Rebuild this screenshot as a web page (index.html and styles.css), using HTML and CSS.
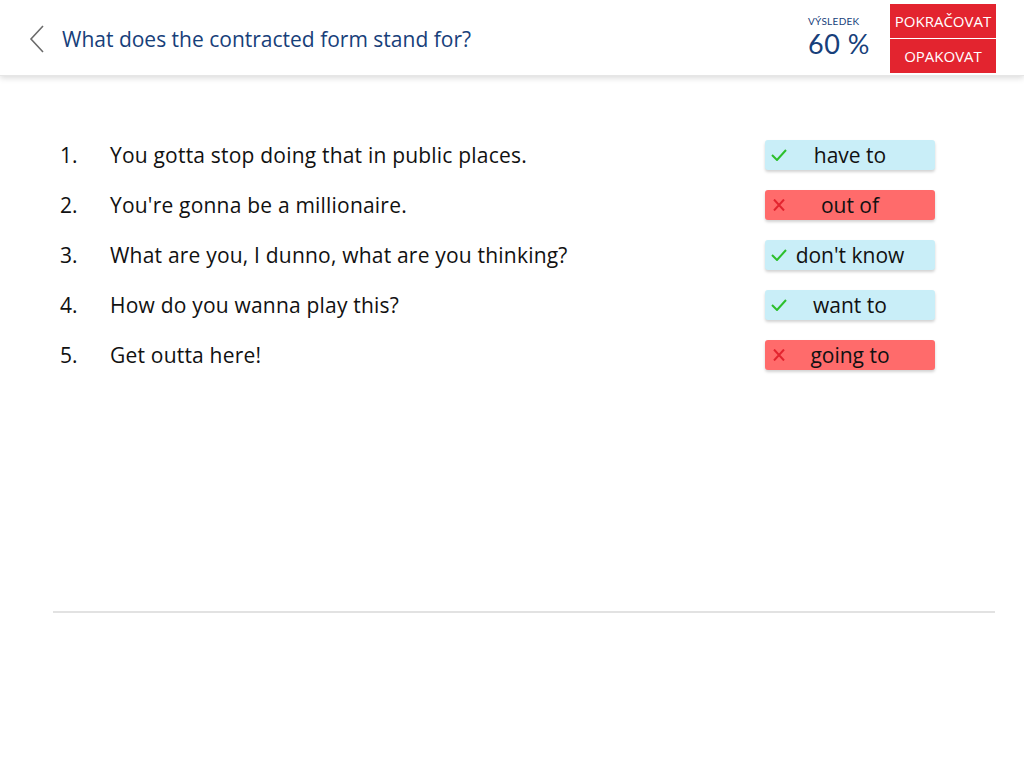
FILE: index.html
```html
<!doctype html>
<html>
<head>
    <meta charset="UTF-8">
    <title>What does the contracted form stand for?</title>
    <link rel="stylesheet" href="styles.css">
</head>
<body>
<header class="topbar">
    <div class="title-group">
        <svg class="back" width="18" height="30" viewBox="0 0 18 30"><path d="M15 2 L3 15 L15 28" fill="none" stroke="#6b6b6b" stroke-width="1.6"/></svg>
        <h1>What does the contracted form stand for?</h1>
    </div>
    <div class="score">
        <span class="score-label">VÝSLEDEK</span>
        <span class="score-value">60 %</span>
    </div>
    <div class="actions">
        <button class="btn">POKRAČOVAT</button>
        <button class="btn">OPAKOVAT</button>
    </div>
</header>

<main class="content">
    <ol class="questions">
        <li class="row">
            <span class="num">1.</span>
            <span class="text">You gotta stop doing that in public places.</span>
            <span class="pill ok"><svg class="mark" width="16" height="12" viewBox="0 0 16 12"><path d="M1 6 L6 11 L15 1" fill="none" stroke="#2cbf2c" stroke-width="2"/></svg>have to</span>
        </li>
        <li class="row">
            <span class="num">2.</span>
            <span class="text">You're gonna be a millionaire.</span>
            <span class="pill bad"><svg class="mark" width="16" height="12" viewBox="0 0 16 12"><path d="M3 0.5 L13 11.5 M13 0.5 L3 11.5" fill="none" stroke="#e3242f" stroke-width="2"/></svg>out of</span>
        </li>
        <li class="row">
            <span class="num">3.</span>
            <span class="text">What are you, I dunno, what are you thinking?</span>
            <span class="pill ok"><svg class="mark" width="16" height="12" viewBox="0 0 16 12"><path d="M1 6 L6 11 L15 1" fill="none" stroke="#2cbf2c" stroke-width="2"/></svg>don't know</span>
        </li>
        <li class="row">
            <span class="num">4.</span>
            <span class="text">How do you wanna play this?</span>
            <span class="pill ok"><svg class="mark" width="16" height="12" viewBox="0 0 16 12"><path d="M1 6 L6 11 L15 1" fill="none" stroke="#2cbf2c" stroke-width="2"/></svg>want to</span>
        </li>
        <li class="row">
            <span class="num">5.</span>
            <span class="text">Get outta here!</span>
            <span class="pill bad"><svg class="mark" width="16" height="12" viewBox="0 0 16 12"><path d="M3 0.5 L13 11.5 M13 0.5 L3 11.5" fill="none" stroke="#e3242f" stroke-width="2"/></svg>going to</span>
        </li>
    </ol>
    <hr class="divider">
</main>
</body>
</html>
```
FILE: styles.css
```css
body {
    margin: 0;
    font-family: "Open Sans", Lato, sans-serif;
    background: #fff;
    color: #111;
}
.topbar {
    height: 76px;
    display: flex;
    align-items: center;
    padding: 2px 28px 0 28px;
    box-shadow: 0 2px 6px rgba(0, 0, 0, 0.15);
    border-bottom: 1px solid #e6e6e6;
    box-sizing: border-box;
}
.title-group {
    display: flex;
    align-items: center;
    gap: 16px;
    flex: 1;
}
.back {
    display: block;
}
h1 {
    margin: 0;
    font-size: 21px;
    font-weight: 400;
    color: #17407a;
}
.score {
    display: flex;
    flex-direction: column;
    width: 82px;
    color: #17407a;
    margin-top: -6px;
    font-family: Lato, "Open Sans", sans-serif;
}
.score-label {
    font-size: 10px;
    line-height: 12px;
    letter-spacing: 0.3px;
    margin-bottom: 3px;
}
.score-value {
    font-size: 27px;
    line-height: 27px;
    letter-spacing: 0.5px;
}
.actions {
    display: flex;
    flex-direction: column;
    gap: 1px;
}
.btn {
    width: 106px;
    height: 34px;
    border: none;
    background: #e3242f;
    color: #fff;
    font-family: inherit;
    font-size: 15px;
    padding: 0;
}
.content {
    padding: 54px 29px 0 53px;
}
.questions {
    list-style: none;
    margin: 0;
    padding: 0;
}
.row {
    display: flex;
    align-items: center;
    height: 50px;
    font-size: 21px;
}
.num {
    width: 50px;
    padding-left: 7px;
}
.text {
    flex: 1;
    letter-spacing: 0.2px;
}
.pill {
    position: relative;
    width: 170px;
    height: 30px;
    margin-right: 60px;
    border-radius: 3px;
    text-align: center;
    line-height: 30px;
    font-size: 21px;
    box-shadow: 0 2px 3px rgba(0, 0, 0, 0.18);
}
.mark {
    position: absolute;
    left: 6px;
    top: 9px;
}
.ok {
    background: #c9eef8;
}
.bad {
    background: #ff6b6b;
}
.divider {
    margin: 231px 0 0 0;
    border: none;
    border-top: 2px solid #e2e2e2;
}
```
